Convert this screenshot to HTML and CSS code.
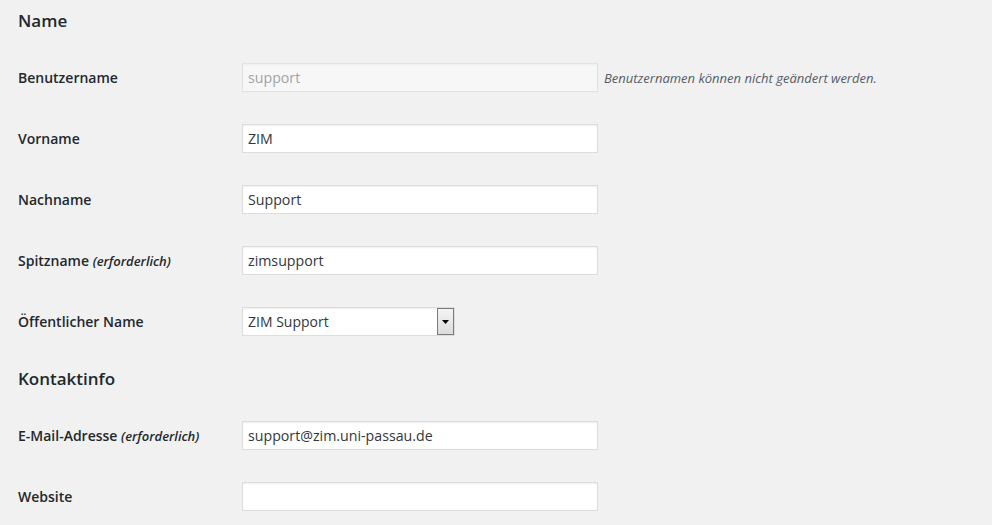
FILE: index.html
```html
<!DOCTYPE html>
<html lang="de">
<head>
<meta charset="utf-8">
<title>Profil</title>
<link rel="stylesheet" href="styles.css">
</head>
<body>
<div class="page">
  <h2 class="section-title first">Name</h2>
  <div class="row">
    <div class="label">Benutzername</div>
    <div class="field">
      <input class="text disabled" type="text" value="support" disabled>
      <span class="description">Benutzernamen können nicht geändert werden.</span>
    </div>
  </div>
  <div class="row">
    <div class="label">Vorname</div>
    <div class="field"><input class="text" type="text" value="ZIM"></div>
  </div>
  <div class="row">
    <div class="label">Nachname</div>
    <div class="field"><input class="text" type="text" value="Support"></div>
  </div>
  <div class="row">
    <div class="label">Spitzname <span class="req">(erforderlich)</span></div>
    <div class="field"><input class="text" type="text" value="zimsupport"></div>
  </div>
  <div class="row">
    <div class="label">Öffentlicher Name</div>
    <div class="field">
      <div class="select">
        <span class="select-value">ZIM Support</span>
        <span class="select-btn">
          <svg width="7" height="4" viewBox="0 0 7 4"><path d="M0 0H7L3.5 4Z" fill="#000"/></svg>
        </span>
      </div>
    </div>
  </div>
  <h2 class="section-title">Kontaktinfo</h2>
  <div class="row">
    <div class="label">E-Mail-Adresse <span class="req">(erforderlich)</span></div>
    <div class="field"><input class="text" type="text" value="support@zim.uni-passau.de"></div>
  </div>
  <div class="row">
    <div class="label">Website</div>
    <div class="field"><input class="text" type="text" value=""></div>
  </div>
</div>
</body>
</html>
```

FILE: styles.css
```css
html, body {
  margin: 0;
  padding: 0;
  background: #f1f1f1;
}
body {
  font-family: "Open Sans", "Liberation Sans", sans-serif;
  color: #23282d;
  font-size: 14px;
}
.page {
  padding-left: 18px;
}
.section-title {
  margin: 0;
  font-size: 17px;
  font-weight: 600;
  height: 53px;
  line-height: 53px;
  color: #23282d;
}
.section-title.first {
  height: 47px;
  line-height: 42px;
}
.row {
  display: flex;
  align-items: center;
  height: 61px;
}
.label {
  width: 224px;
  font-weight: 600;
  font-size: 14px;
  margin-top: -1px;
}
.req {
  font-style: italic;
  font-size: 13px;
}
.field {
  display: flex;
  align-items: center;
}
.text {
  box-sizing: border-box;
  width: 356px;
  height: 29px;
  margin: 0;
  padding: 0 5px;
  border: 1px solid #ddd;
  box-shadow: inset 0 1px 2px rgba(0,0,0,0.07);
  background: #fff;
  color: #32373c;
  font-family: "Open Sans", "Liberation Sans", sans-serif;
  font-size: 14.2px;
  outline: none;
}
.text.disabled {
  background: #f7f7f7;
  color: #a0a5aa;
  border-color: #e2e2e2;
  box-shadow: inset 0 1px 2px rgba(0,0,0,0.04);
}
.description {
  margin-left: 6px;
  font-style: italic;
  font-size: 13px;
  color: #555d66;
}
.select {
  position: relative;
  box-sizing: border-box;
  width: 213px;
  height: 29px;
  border: 1px solid #ddd;
  box-shadow: inset 0 1px 2px rgba(0,0,0,0.07);
  background: #fff;
  display: flex;
  align-items: center;
  padding-left: 5px;
  color: #32373c;
}
.select-btn {
  position: absolute;
  right: 0;
  top: 0;
  bottom: 0;
  width: 17px;
  box-sizing: border-box;
  border: 1px solid #7a7a7a;
  background: linear-gradient(#f4f4f4, #dcdcdc);
  display: flex;
  align-items: center;
  justify-content: center;
}
```
